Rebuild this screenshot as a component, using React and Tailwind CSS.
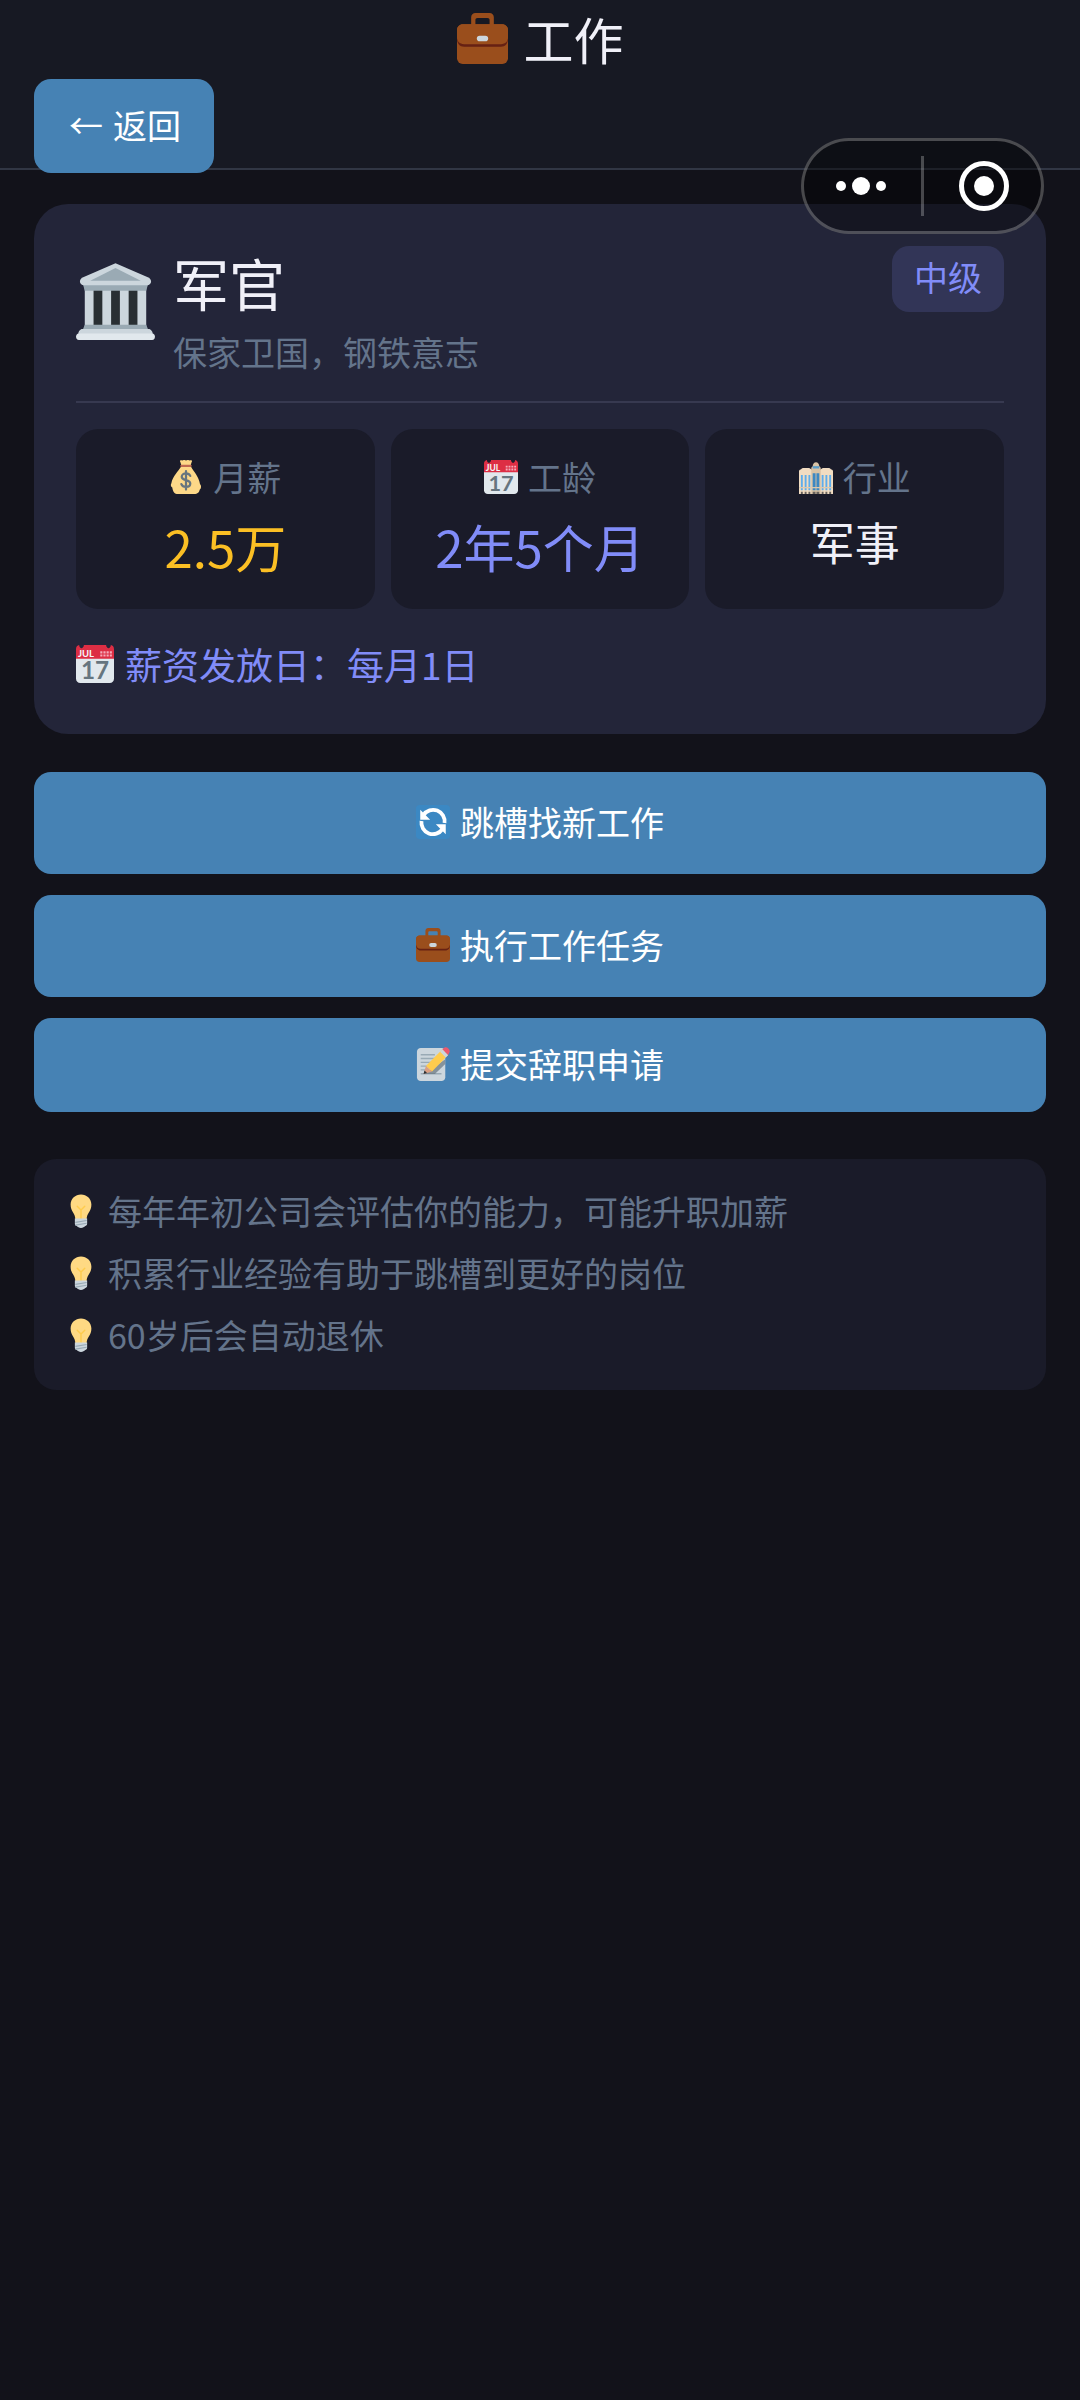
import React from "react";

const Emoji = ({ className, children }) => (
  <svg viewBox="0 0 36 36" className={className} aria-hidden="true">
    {children}
  </svg>
);

const Briefcase = ({ className }) => (
  <Emoji className={className}>
    <path fill="#9a4e1c" d="M13 0c-1.700 0-3 1.300-3 3v6h3V5c0-1 .5-1.500 1.500-1.500h7c1 0 1.500.5 1.500 1.500v4h3V3c0-1.700-1.300-3-3-3z" />
    <rect x="0" y="8" width="36" height="28" rx="4" fill="#9a4e1c" />
    <path fill="#662113" d="M0 18c0 3.500 1.800 5.800 5 5.800h26c3.200 0 5-2.300 5-5.800z" />
    <path fill="#9a4e1c" d="M4 8h28c2.200 0 4 1.800 4 4v5c0 3.200-1.800 5-5 5H5c-3.200 0-5-1.800-5-5v-5c0-2.200 1.800-4 4-4z" />
    <rect x="14" y="16" width="8" height="4" rx="2" fill="#ccd6dd" />
  </Emoji>
);

const Museum = ({ className }) => (
  <Emoji className={className}>
    <path fill="#ccd6dd" d="M4 12h28v19H4z" />
    <path fill="#292f33" d="M8 13h4v17H8zM16 13h4v17h-4zM24 13h4v17h-4z" />
    <path fill="#9aaab4" d="M3 10h30l-1 3.500H4zM4 29h28l1 2.500H3z" />
    <path fill="#ccd6dd" d="M18 1l15 6.500c2 1 1.300 3.500-.5 3.500h-29c-1.800 0-2.500-2.500-.5-3.500z" />
    <path fill="#9aaab4" d="M18 3.200L29.500 9h-23z" />
    <path fill="#ccd6dd" d="M2.500 31h31c1 .5 1.500 1.300 1.500 2.500H1c0-1.200.5-2 1.500-2.500z" />
    <path fill="#e1e8ed" d="M1.300 33h33.400c1.700 0 1.700 3 0 3H1.300c-1.700 0-1.700-3 0-3z" />
  </Emoji>
);

const MoneyBag = ({ className }) => (
  <Emoji className={className}>
    <path fill="#fdd888" d="M12.500 7.500C10 12 4 17 2.500 24.500 1.500 26 1.800 28 3.500 29c.5 4.500 2.500 7 6 7h17c4 0 5.500-2 6-4.500 2-1.500 1.800-4.500.3-6C31.500 17.500 26 12 23.500 7.500z" />
    <path fill="#fdd888" d="M12 2c-1.300-1.200.5-2.300 2-1.500C15.500-.3 17-.1 18 .5c1.300-.7 2.700-.7 4 0 1.600-.8 3.200.3 2 1.500-.5 1.300-.7 2.500-1 3.500H13c-.3-1-.5-2.200-1-3.500z" />
    <rect x="12" y="5" width="12" height="2.500" rx="1.200" fill="#bf6952" />
    <path fill="none" stroke="#67757f" strokeWidth="2.400" strokeLinecap="round" d="M22.500 16.800c-.8-1.700-2.400-2.600-4.500-2.600-2.500 0-4.500 1.400-4.500 3.600 0 4.600 9 2.500 9 7.100 0 2.200-2 3.600-4.500 3.600-2.300 0-4.200-1.100-4.900-3M18 11.800v19.500" />
  </Emoji>
);

const Calendar = ({ className }) => (
  <Emoji className={className}>
    <path fill="#e1e8ed" d="M0 12h36v20c0 2.200-1.800 4-4 4H4c-2.200 0-4-1.800-4-4z" />
    <path fill="#dd2e44" d="M36 13V4c0-2.200-1.200-3.800-3-4-.3 4-4 4-4.500 0h-21C7 4 3.300 4 3 0 1.200.2 0 1.800 0 4v9z" />
    <g fill="#f4abba">
      <path d="M23 6h2v2h-2zM26 6h2v2h-2zM29 6h2v2h-2zM32 6h2v2h-2zM23 9h2v2h-2zM26 9h2v2h-2zM29 9h2v2h-2zM32 9h2v2h-2z" />
    </g>
    <text x="9.500" y="11.200" textAnchor="middle" fontSize="9" fontWeight="700" fontFamily="Lato, sans-serif" fill="#f5f8fa">JUL</text>
    <text x="18" y="32.500" textAnchor="middle" fontSize="23" fontWeight="700" fontFamily="Lato, sans-serif" fill="#66757f">17</text>
  </Emoji>
);

const Office = ({ className }) => (
  <Emoji className={className}>
    <path fill="#f1dcc1" d="M0 12c0-1.500 1-2 2-2 .8-1 2-1.500 3-1.500h5c1 0 2 .5 3 1.500h10c1-1 2-1.500 3-1.500h5c1 0 2.200.5 3 1.500 1 0 2 .5 2 2v24H0z" />
    <path fill="#d9c3a5" d="M13 9c0-1 .5-1.500 1.500-2 0-2.500 1.500-4.500 3.500-4.500s3.500 2 3.500 4.500c1 .5 1.500 1 1.500 2v27H13z" />
    <path fill="#5c9dc8" d="M14.500 6.500h7V9h-7z" />
    <path fill="#3b88c3" d="M14.500 14h3v18h-3zM18.500 14h3v18h-3z" />
    <path fill="#5dadec" d="M2 16h2v16H2zM6 16h2v16H6zM10 16h2v16h-2zM24 16h2v16h-2zM28 16h2v16h-2zM32 16h2v16h-2z" />
    <path fill="#dcc9ae" d="M0 28.500h36V30H0z" />
    <path fill="#66615c" d="M2 33.500h2V36H2zM6 33.500h2V36H6zM10 33.500h2V36h-2zM14.500 33.500h3V36h-3zM18.500 33.500h3V36h-3zM24 33.500h2V36h-2zM28 33.500h2V36h-2zM32 33.500h2V36h-2z" />
  </Emoji>
);

const Refresh = ({ className }) => (
  <Emoji className={className}>
    <rect width="36" height="36" rx="4" fill="#3b88c3" />
    <path fill="none" stroke="#fff" strokeWidth="4" d="M8 10.500A12.200 12.200 0 0 1 30.200 19M28 25.500A12.200 12.200 0 0 1 5.800 17" />
    <path fill="#fff" d="M4.500 5v10.500H15zM31.500 31V20.500H21z" />
  </Emoji>
);

const Memo = ({ className }) => (
  <Emoji className={className}>
    <path fill="#ccd6dd" d="M31 32c0 2.200-1.800 4-4 4H5c-2.200 0-4-1.800-4-4V5c0-2.200 1.800-4 4-4h22c2.200 0 4 1.800 4 4z" />
    <path fill="#99aab5" d="M5 7.500h15V9H5zM5 11.500h15V13H5zM5 15.500h12V17H5zM5 19.500h10V21H5zM5 23.500h6V25H5zM5 27.500h22V29H5z" />
    <path fill="#66757f" fillOpacity=".7" d="M31 13v5L20 28.500H9z" />
    <path fill="#ffcc4d" d="M10.500 20L28 2.500l6 6L17 26z" />
    <path fill="#d99e82" d="M10.500 20L8 28.500 17 26z" />
    <path fill="#292f33" d="M9 25l-1 3.500 3.700-1z" />
    <path fill="#ccd6dd" d="M25.500 5L28 2.500l6 6-2.500 2.500z" />
    <path fill="#ea596e" d="M28 2.500L30 .800c2.500-2 7.300 2.500 5.200 5.200L34 8.500z" />
  </Emoji>
);

const Bulb = ({ className }) => (
  <Emoji className={className}>
    <path fill="#ffd983" d="M29 11.100C29 5 24 .5 18 .5S7 5 7 11.100c0 8 5 8.600 5 15.900h12c0-7.300 5-8 5-15.900z" />
    <path fill="none" stroke="#ffcc4d" strokeWidth="1.500" strokeLinecap="round" strokeLinejoin="round" d="M14 13l4 4 4-4M18 17v9" />
    <path fill="#ccd6dd" d="M11.500 26h13v5.500c0 1.500-1 2-2 2.500-1 1.200-2.500 2-4.500 2s-3.500-.8-4.500-2c-1-.5-2-1-2-2.500z" />
    <path fill="none" stroke="#99aab5" strokeWidth="1.200" d="M12 30l12-2M12 33l12-2" />
  </Emoji>
);

const stats = [
  { label: "月薪", value: "2.5万", Icon: MoneyBag, valueClass: "text-[51px] leading-[76px] text-[#fbbf24]" },
  { label: "工龄", value: "2年5个月", Icon: Calendar, valueClass: "text-[51px] leading-[76px] text-[#818cf8]" },
  { label: "行业", value: "军事", Icon: Office, valueClass: "text-[45px] leading-[68px] text-[#f0f0f8]" },
];

const actions = [
  { label: "跳槽找新工作", Icon: Refresh, sizeClass: "h-[102px]" },
  { label: "执行工作任务", Icon: Briefcase, sizeClass: "h-[102px]" },
  { label: "提交辞职申请", Icon: Memo, sizeClass: "h-[94px]" },
];

const tips = [
  "每年年初公司会评估你的能力，可能升职加薪",
  "积累行业经验有助于跳槽到更好的岗位",
  "60岁后会自动退休",
];

const App = () => {
  return (
    <div className="relative min-h-screen bg-[#12121a] font-['Noto_Sans_CJK_SC',sans-serif] text-[34px] leading-[50px] text-[#f0f0f8]">
      {/* Header */}
      <header className="border-b-2 border-[#313644] bg-[#171923] px-[34px]">
        <h1 className="flex items-center justify-center gap-[16px] pb-[2px] text-[50px] leading-[77px]">
          <Briefcase className="size-[51px]" />
          工作
        </h1>
        <button
          type="button"
          className="relative -mb-[5px] flex h-[94px] w-[180px] items-center justify-center gap-[10px] rounded-[17px] bg-[#4682b4] pb-[2px] pl-[2px] text-white"
        >
          <span>←</span>
          <span>返回</span>
        </button>
      </header>

      {/* Mini program capsule */}
      <div className="absolute right-[36px] top-[138px] flex h-[96px] w-[243px] items-center rounded-full border-3 border-white/25 bg-black/40">
        <button type="button" aria-label="更多" className="flex flex-1 items-center justify-center gap-[6px] pr-[3px]">
          <span className="size-[10px] rounded-full bg-white" />
          <span className="size-[18px] rounded-full bg-white" />
          <span className="size-[10px] rounded-full bg-white" />
        </button>
        <span className="h-[60px] w-[3px] bg-white/25" />
        <button type="button" aria-label="关闭" className="flex flex-1 items-center justify-center pl-[3px]">
          <span className="flex size-[50px] items-center justify-center rounded-full border-5 border-white">
            <span className="size-[20px] rounded-full bg-white" />
          </span>
        </button>
      </div>

      <main className="px-[34px] pt-[34px]">
        {/* Job card */}
        <section className="rounded-[34px] bg-[#232539] p-[42px]">
          <div className="flex items-start border-b-2 border-[#373950] pb-[24px]">
            <Museum className="mt-[15px] size-[79px] shrink-0" />
            <div className="ml-[18px] flex-1">
              <h2 className="text-[56px] leading-[72px]">军官</h2>
              <p className="mt-[9px] text-[#64748b]">保家卫国，钢铁意志</p>
            </div>
            <span className="rounded-[17px] bg-[#323557] px-[22px] pt-[6px] pb-[10px] text-[#818cf8]">中级</span>
          </div>

          <div className="mt-[26px] grid grid-cols-3 gap-[16px]">
            {stats.map(({ label, value, Icon, valueClass }) => (
              <div key={label} className="rounded-[22px] bg-[#1a1b29] pt-[23px] pb-[25px] text-center">
                <div className="flex items-center justify-center gap-[10px] text-[#64748b]">
                  <Icon className="size-[34px]" />
                  {label}
                </div>
                <div className={`mt-[6px] ${valueClass}`}>{value}</div>
              </div>
            ))}
          </div>

          <p className="mt-[29px] flex items-center gap-[11px] pb-[2px] text-[37px] leading-[52px] text-[#818cf8]">
            <Calendar className="size-[38px]" />
            薪资发放日：每月1日
          </p>
        </section>

        {/* Actions */}
        <div className="mt-[38px] flex flex-col gap-[21px]">
          {actions.map(({ label, Icon, sizeClass }) => (
            <button
              key={label}
              type="button"
              className={`flex w-full items-center justify-center gap-[10px] rounded-[17px] bg-[#4682b4] pb-[2px] text-white ${sizeClass}`}
            >
              <Icon className="size-[34px]" />
              {label}
            </button>
          ))}
        </div>

        {/* Tips */}
        <ul className="mt-[47px] rounded-[22px] bg-[#1a1b29] px-[30px] pt-[21px] pb-[24px] leading-[62px] text-[#64748b]">
          {tips.map((tip) => (
            <li key={tip} className="flex items-center gap-[10px]">
              <Bulb className="size-[34px] shrink-0" />
              {tip}
            </li>
          ))}
        </ul>
      </main>
    </div>
  );
};

export default App;
